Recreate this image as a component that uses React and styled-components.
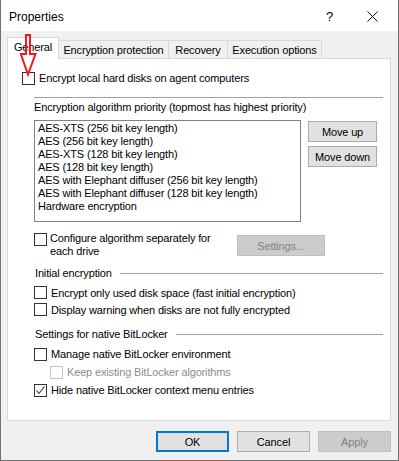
import React from 'react'
import styled, { createGlobalStyle } from 'styled-components'

const GlobalStyle = createGlobalStyle`
  html, body {
    margin: 0;
    padding: 0;
    background: #ffffff;
  }

  * {
    box-sizing: border-box;
  }
`

const algorithms = [
  'AES-XTS (256 bit key length)',
  'AES (256 bit key length)',
  'AES-XTS (128 bit key length)',
  'AES (128 bit key length)',
  'AES with Elephant diffuser (256 bit key length)',
  'AES with Elephant diffuser (128 bit key length)',
  'Hardware encryption',
]

const tabs = [
  { label: 'General', width: 52, active: true },
  { label: 'Encryption protection', width: 110 },
  { label: 'Recovery', width: 59 },
  { label: 'Execution options', width: 94 },
]

const CheckBox = ({ checked, disabled }) => (
  <Box $disabled={disabled}>
    {checked && (
      <svg width="11" height="11" viewBox="0 0 11 11">
        <polyline points="1.5,5.5 4,8.5 9.5,1.5" fill="none" stroke="#333" strokeWidth="1.1" />
      </svg>
    )}
  </Box>
)

const Check = ({ label, checked, disabled, indent, height }) => (
  <CheckRow $indent={indent} $height={height}>
    <CheckBox checked={checked} disabled={disabled} />
    <CheckLabel $disabled={disabled}>{label}</CheckLabel>
  </CheckRow>
)

export default function App() {
  return (
    <>
      <GlobalStyle />
      <Window>
        <TitleBar>
          <Title>Properties</Title>
          <TitleButtons>
            <HelpMark>?</HelpMark>
            <svg width="11" height="11" viewBox="0 0 11 11">
              <path d="M0.5 0.5 L10.5 10.5 M10.5 0.5 L0.5 10.5" stroke="#111" strokeWidth="1" />
            </svg>
          </TitleButtons>
        </TitleBar>

        <Body>
          <TabRow>
            {tabs.map((t) => (
              <Tab key={t.label} $active={t.active} $width={t.width}>
                {t.label}
              </Tab>
            ))}
          </TabRow>

          <Panel>
            <Check label="Encrypt local hard disks on agent computers" indent={14} height={16} />

            <Separator />

            <Section>
              <Label>Encryption algorithm priority (topmost has highest priority)</Label>
              <ListArea>
                <ListBox>
                  {algorithms.map((a) => (
                    <ListItem key={a}>{a}</ListItem>
                  ))}
                </ListBox>
                <SideButtons>
                  <Button $width={69}>Move up</Button>
                  <Button $width={69}>Move down</Button>
                </SideButtons>
              </ListArea>

              <ConfigRow>
                <ConfigCheck>
                  <CheckBox />
                  <WrapLabel>
                    Configure algorithm separately for
                    <br />
                    each drive
                  </WrapLabel>
                </ConfigCheck>
                <Button $width={88} $disabled>Settings...</Button>
              </ConfigRow>
            </Section>

            <GroupHeader $top={8}>
              <span>Initial encryption</span>
              <GroupLine />
            </GroupHeader>
            <Group $top={4}>
              <Check label="Encrypt only used disk space (fast initial encryption)" height={17} />
              <Check label="Display warning when disks are not fully encrypted" height={17} />
            </Group>

            <GroupHeader $top={9}>
              <span>Settings for native BitLocker</span>
              <GroupLine />
            </GroupHeader>
            <Group $top={4}>
              <Check label="Manage native BitLocker environment" height={18} />
              <Check label="Keep existing BitLocker algorithms" disabled indent={16} height={18} />
              <Check label="Hide native BitLocker context menu entries" checked height={18} />
            </Group>
          </Panel>

          <Footer>
            <Button $width={73} $default>OK</Button>
            <Button $width={73}>Cancel</Button>
            <Button $width={73} $disabled>Apply</Button>
          </Footer>
        </Body>

        <Arrow width="18" height="44" viewBox="0 0 18 44">
          <path
            d="M6 1 L10 1 L10 20 L15.5 20 L8 40.5 L0.8 20 L6 20 Z"
            fill="none"
            stroke="#ee1c1c"
            strokeWidth="2"
            strokeLinejoin="miter"
          />
        </Arrow>
      </Window>
    </>
  )
}

const Window = styled.div`
  position: relative;
  display: flex;
  flex-direction: column;

  width: 399px;
  height: 461px;

  border: 1px solid #717171;
  border-top: none;
  background-color: #f0f0f0;

  font-family: 'Liberation Sans', Arial, sans-serif;
  font-size: 11px;
  letter-spacing: -0.15px;
  color: #000000;
`

const TitleBar = styled.div`
  display: flex;
  align-items: center;
  justify-content: space-between;

  height: 31px;
  padding: 2px 20px 0 8px;
  background-color: #ffffff;
`

const Title = styled.div`
  font-size: 12px;
  letter-spacing: 0;
`

const TitleButtons = styled.div`
  display: flex;
  align-items: center;
  gap: 34px;
`

const HelpMark = styled.span`
  font-size: 13px;
`

const Body = styled.div`
  display: flex;
  flex-direction: column;
  flex: 1;

  padding: 6px 7px 0 6px;
`

const TabRow = styled.div`
  display: flex;
  align-items: flex-end;

  height: 22px;
  margin-bottom: -1px;
  position: relative;
  z-index: 1;
`

const Tab = styled.div`
  display: flex;
  align-items: center;
  justify-content: center;
  flex-shrink: 0;

  width: ${(p) => p.$width}px;
  height: ${(p) => (p.$active ? 22 : 19)}px;
  padding-bottom: ${(p) => (p.$active ? 3 : 0)}px;

  border: 1px solid #d9d9d9;
  border-bottom: ${(p) => (p.$active ? 'none' : '1px solid #d9d9d9')};
  border-left: ${(p) => (p.$active ? '1px solid #d9d9d9' : 'none')};
  background-color: ${(p) => (p.$active ? '#ffffff' : '#f0f0f0')};
  white-space: nowrap;
`

const Panel = styled.div`
  display: flex;
  flex-direction: column;
  flex: 1;

  padding: 11px 7px 0 0;
  border: 1px solid #d9d9d9;
  background-color: #ffffff;
`

const CheckRow = styled.div`
  display: flex;
  align-items: center;
  gap: 4px;

  height: ${(p) => p.$height}px;
  margin-left: ${(p) => p.$indent ?? 0}px;
`

const Box = styled.div`
  display: flex;
  align-items: center;
  justify-content: center;
  flex-shrink: 0;

  width: 13px;
  height: 13px;
  border: 1px solid ${(p) => (p.$disabled ? '#c4c4c4' : '#333333')};
  background-color: #ffffff;
`

const CheckLabel = styled.span`
  color: ${(p) => (p.$disabled ? '#8d8d8d' : '#000000')};
  white-space: nowrap;
`

const Separator = styled.div`
  height: 1px;
  margin: 11px 0 0 26px;
  background-color: #a0a0a0;
`

const Section = styled.div`
  display: flex;
  flex-direction: column;
  margin-left: 26px;
`

const Label = styled.div`
  line-height: 14px;
  margin-top: 2px;
`

const ListArea = styled.div`
  display: flex;
  align-items: flex-start;
  gap: 7px;
  margin-top: 6px;
`

const ListBox = styled.div`
  width: 267px;
  height: 102px;
  padding: 1px 3px;
  border: 1px solid #828282;
`

const ListItem = styled.div`
  line-height: 13px;
  white-space: nowrap;
`

const SideButtons = styled.div`
  display: flex;
  flex-direction: column;
  gap: 4px;
  margin-top: 1px;
`

const Button = styled.div`
  display: flex;
  align-items: center;
  justify-content: center;

  width: ${(p) => p.$width}px;
  height: 21px;

  border: ${(p) => (p.$default ? '2px solid #0078d7' : '1px solid #adadad')};
  background-color: ${(p) => (p.$disabled ? '#cccccc' : '#e1e1e1')};
  border-color: ${(p) => (p.$disabled ? '#bfbfbf' : p.$default ? '#0078d7' : '#adadad')};
  color: ${(p) => (p.$disabled ? '#838383' : '#000000')};
`

const ConfigRow = styled.div`
  display: flex;
  align-items: flex-start;

  height: 26px;
  margin-top: 10px;

  & > ${Button} {
    margin-top: 3px;
  }
`

const ConfigCheck = styled.div`
  display: flex;
  align-items: flex-start;
  gap: 3px;
  width: 203px;

  & > ${Box} {
    margin-top: 1px;
  }
`

const WrapLabel = styled.div`
  line-height: 13px;
`

const GroupHeader = styled.div`
  display: flex;
  align-items: center;
  gap: 8px;

  height: 14px;
  margin: ${(p) => p.$top}px 0 0 27px;
  white-space: nowrap;
`

const GroupLine = styled.div`
  flex: 1;
  height: 1px;
  background-color: #a0a0a0;
`

const Group = styled.div`
  display: flex;
  flex-direction: column;
  margin: ${(p) => p.$top}px 0 0 26px;
`

const Footer = styled.div`
  display: flex;
  justify-content: flex-end;
  gap: 8px;

  padding: 10px 0 8px;
`

const Arrow = styled.svg`
  position: absolute;
  left: 19px;
  top: 34px;
  z-index: 2;
`
